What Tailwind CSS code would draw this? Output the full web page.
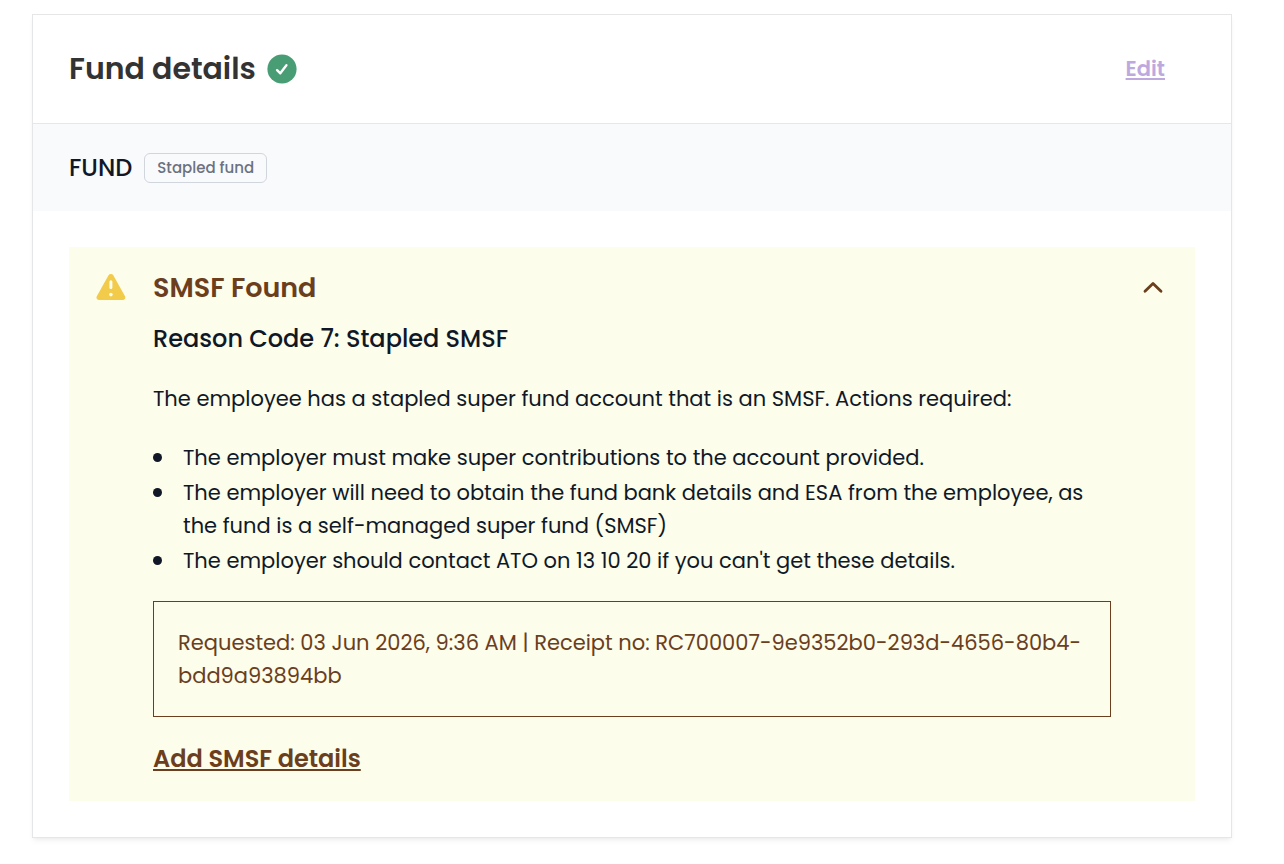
<!DOCTYPE html>
<html lang="en">
<head>
  <meta charset="UTF-8" />
  <meta name="viewport" content="width=device-width, initial-scale=1.0" />
  <title>Fund details</title>
  <script src="https://cdn.jsdelivr.net/npm/@tailwindcss/browser@4"></script>
</head>
<body class="bg-white font-['Poppins','Inter',sans-serif] text-gray-900">
  <main class="mt-[14px] mb-[26px] ml-8 mr-[52px] border border-[#e5e6e8] bg-white shadow-md shadow-black/5">
    <!-- HEADER -->
    <header class="flex items-center justify-between border-b border-gray-200 py-[31px] pl-9 pr-[66px]">
      <div class="flex items-center gap-[11px]">
        <h1 class="text-[30px] leading-[46px] font-semibold text-[#333333]">Fund details</h1>
        <svg class="h-[30px] w-[30px]" viewBox="0 0 30 30" fill="none" role="img" aria-label="Complete">
          <circle cx="15" cy="15" r="14.6" fill="#489d75" />
          <path d="M10.1 16.2l3.2 3.1 6.1-8" stroke="#fff" stroke-width="2.4" stroke-linecap="round" stroke-linejoin="round" />
        </svg>
      </div>
      <a href="#" class="text-[21px] leading-8 font-semibold text-[#bea9de] underline decoration-2 underline-offset-2">Edit</a>
    </header>

    <!-- FUND TYPE -->
    <div class="flex items-center gap-3 bg-[#f9fafc] px-9 pt-[26px] pb-[25px]">
      <h2 class="text-[24px] leading-9 font-medium">FUND</h2>
      <span class="rounded-md border border-gray-300 px-3 text-[15px] leading-7 font-medium text-gray-500">Stapled fund</span>
    </div>

    <!-- SMSF ALERT -->
    <div class="p-9">
      <section class="flex items-start bg-[#fcfdea] py-6 pl-[26px] pr-8">
        <svg class="mt-[2px] mr-[26px] h-7 w-8 shrink-0" viewBox="0 0 32 28" aria-hidden="true">
          <path d="M13.4 2.5a2.9 2.9 0 0 1 5 0l11.6 20.8a2.6 2.6 0 0 1-2.3 3.8H4.1a2.6 2.6 0 0 1-2.3-3.8z" fill="#f2cb4a" />
          <path d="M15.9 8.8v5.8" stroke="#fcfdea" stroke-width="3" stroke-linecap="round" />
          <circle cx="15.9" cy="21.6" r="1.8" fill="#fcfdea" />
        </svg>
        <div class="min-w-0 flex-1">
          <h2 class="text-[27px] leading-[34px] font-semibold text-[#6b3e1e]">SMSF Found</h2>
          <h3 class="mt-[18px] text-[24px] leading-8 font-medium">Reason Code 7: Stapled SMSF</h3>
          <p class="mt-[27px] text-[21px] leading-[33px]">The employee has a stapled super fund account that is an SMSF. Actions required:</p>
          <ul class="mt-[26px] space-y-[2px] text-[21px] leading-[33px]">
            <li class="flex gap-[21px] before:mt-3 before:h-[9px] before:w-[9px] before:shrink-0 before:rounded-full before:bg-gray-900"><span>The employer must make super contributions to the account provided.</span></li>
            <li class="flex gap-[21px] before:mt-3 before:h-[9px] before:w-[9px] before:shrink-0 before:rounded-full before:bg-gray-900"><span>The employer will need to obtain the fund bank details and ESA from the employee, as the fund is a self-managed super fund (SMSF)</span></li>
            <li class="flex gap-[21px] before:mt-3 before:h-[9px] before:w-[9px] before:shrink-0 before:rounded-full before:bg-gray-900"><span>The employer should contact ATO on 13 10 20 if you can't get these details.</span></li>
          </ul>
          <div class="mt-6 border border-[#6b3e1e] p-6 text-[21px] leading-[33px] text-[#6b3e1e]">Requested: 03 Jun 2026, 9:36 AM | Receipt no: RC700007-9e9352b0-293d-4656-80b4-bdd9a93894bb</div>
          <a href="#" class="mt-6 inline-block align-top text-[24px] leading-9 font-semibold text-[#6b3e1e] underline decoration-2 underline-offset-2">Add SMSF details</a>
        </div>
        <button type="button" aria-label="Collapse" aria-expanded="true" class="ml-8 shrink-0 py-1 text-[#6b3e1e]">
          <svg class="h-6 w-5" viewBox="0 0 20 24" fill="none" stroke="currentColor" stroke-width="2.8" stroke-linecap="round" stroke-linejoin="round">
            <path d="M2 16.3l8-7.8 8 7.8" />
          </svg>
        </button>
      </section>
    </div>
  </main>
</body>
</html>
